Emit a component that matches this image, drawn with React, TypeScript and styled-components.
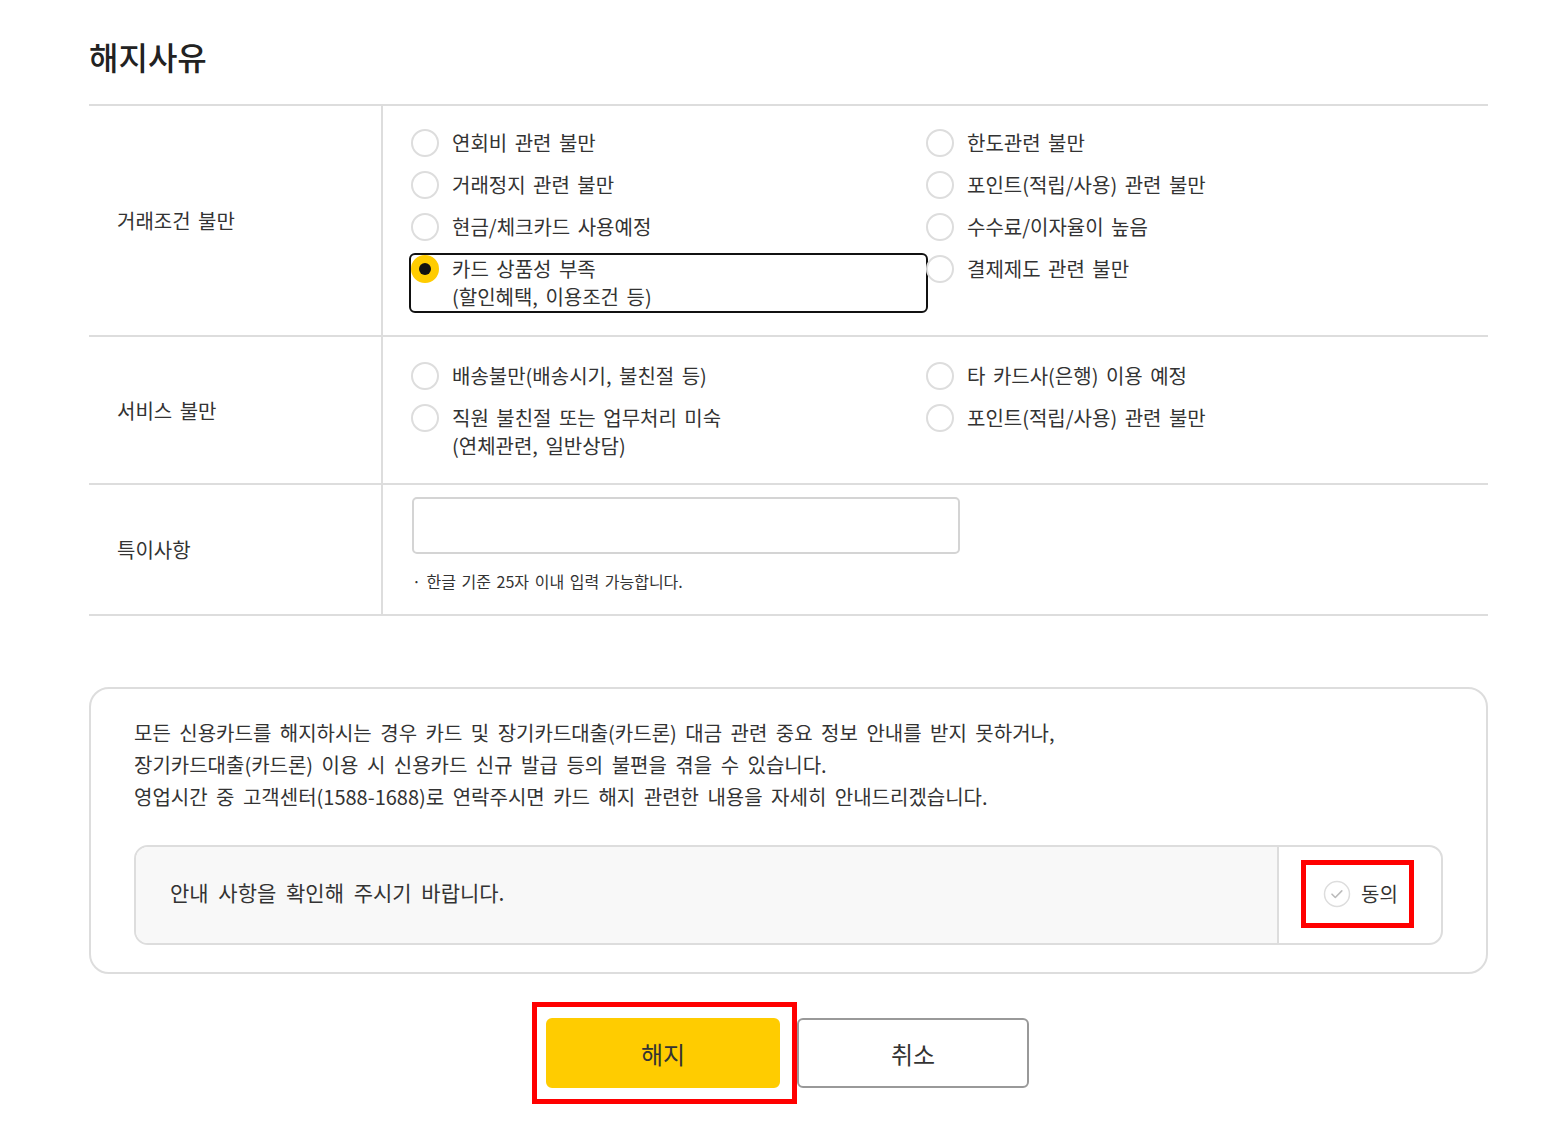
import styled, { createGlobalStyle } from 'styled-components';

const GlobalStyle = createGlobalStyle`
    body {
        margin: 0;
        background: #fff;
        font-family: 'Noto Sans CJK KR', 'Noto Sans', sans-serif;
        color: #333;
    }
    * {
        box-sizing: border-box;
    }
`;

const Page = styled.div`
    width: 1566px;
    padding: 31px 78px 20px 89px;
`;

const Title = styled.h2`
    margin: 0 0 23px;
    font-size: 32px;
    font-weight: 500;
    line-height: 50px;
    color: #222;
`;

//table
const Table = styled.div`
    border-top: 2px solid #ddd;
`;

const Row = styled.div`
    display: grid;
    grid-template-columns: 294px 1fr;
    border-bottom: 2px solid #ddd;
`;

const Label = styled.div`
    display: flex;
    align-items: center;
    padding-left: 28px;
    border-right: 2px solid #ddd;
    font-size: 20px;
    color: #333;
    word-spacing: 3px;
`;

const Cell = styled.div<{ $pad: string }>`
    padding: ${(p) => p.$pad};
`;

const RadioGrid = styled.div<{ $rows: number }>`
    display: grid;
    grid-template-columns: 515px 515px;
    grid-auto-flow: column;
    grid-template-rows: repeat(${(p) => p.$rows}, auto);
    row-gap: 14px;
`;

const RadioItem = styled.label<{ $focused?: boolean }>`
    display: flex;
    align-items: flex-start;
    gap: 13px;
    font-size: 20px;
    line-height: 28px;
    color: #333;
    word-spacing: 3px;
    border-radius: 4px;
    outline: ${(p) => (p.$focused ? '2.5px solid #111' : 'none')};
    cursor: pointer;
`;

const Circle = styled.span<{ $checked?: boolean }>`
    flex: none;
    width: 28px;
    height: 28px;
    border-radius: 50%;
    border: 2px solid ${(p) => (p.$checked ? '#ffcc00' : '#ddd')};
    background: ${(p) => (p.$checked ? '#ffcc00' : '#fff')};
    display: flex;
    align-items: center;
    justify-content: center;
    &::after {
        content: '';
        display: ${(p) => (p.$checked ? 'block' : 'none')};
        width: 12px;
        height: 12px;
        border-radius: 50%;
        background: #111;
    }
`;

const TextInput = styled.input`
    display: block;
    width: 548px;
    height: 57px;
    border: 2px solid #d4d4d4;
    border-radius: 5px;
    font-size: 18px;
    padding: 0 16px;
    font-family: inherit;
    outline: none;
`;

const Note = styled.p`
    margin: 16px 0 0;
    font-size: 16px;
    line-height: 22px;
    color: #333;
    word-spacing: 2px;
`;

//notice
const NoticeBox = styled.div`
    margin-top: 71px;
    border: 2px solid #ddd;
    border-radius: 20px;
    padding: 28px 43px 27px 43px;
`;

const NoticeText = styled.p`
    margin: 0;
    font-size: 20px;
    line-height: 32px;
    color: #333;
    word-spacing: 4px;
`;

const ConfirmBar = styled.div`
    margin-top: 32px;
    display: flex;
    height: 100px;
    border: 2px solid #ddd;
    border-radius: 14px;
    overflow: hidden;
`;

const ConfirmMsg = styled.div`
    flex: 1;
    display: flex;
    align-items: center;
    padding: 0 0 6px 34px;
    background: #f8f8f8;
    border-right: 2px solid #ddd;
    font-size: 21px;
    color: #333;
    word-spacing: 5px;
`;

const AgreeCell = styled.div`
    width: 162px;
    display: flex;
    align-items: center;
    padding: 0 0 2px 22px;
`;

const Highlight = styled.div<{ $pad: string }>`
    border: 5px solid #f00;
    padding: ${(p) => p.$pad};
    display: flex;
    align-items: center;
`;

const AgreeLabel = styled.span`
    display: flex;
    align-items: center;
    gap: 10px;
    font-size: 20px;
    color: #333;
`;

//buttons
const ButtonRow = styled.div`
    display: flex;
    justify-content: center;
    align-items: center;
    margin-top: 28px;
    padding-right: 16px;
`;

const Button = styled.button<{ $primary?: boolean }>`
    width: ${(p) => (p.$primary ? '234px' : '232px')};
    height: 70px;
    border-radius: 6px;
    border: 2px solid ${(p) => (p.$primary ? '#ffcc00' : '#999')};
    background: ${(p) => (p.$primary ? '#ffcc00' : '#fff')};
    font-family: inherit;
    font-size: 24px;
    color: #333;
    cursor: pointer;
`;

const tradeReasons = [
    { text: '연회비 관련 불만' },
    { text: '거래정지 관련 불만' },
    { text: '현금/체크카드 사용예정' },
    { text: '카드 상품성 부족', sub: '(할인혜택, 이용조건 등)', checked: true },
    { text: '한도관련 불만' },
    { text: '포인트(적립/사용) 관련 불만' },
    { text: '수수료/이자율이 높음' },
    { text: '결제제도 관련 불만' },
];

const serviceReasons = [
    { text: '배송불만(배송시기, 불친절 등)' },
    { text: '직원 불친절 또는 업무처리 미숙', sub: '(연체관련, 일반상담)' },
    { text: '타 카드사(은행) 이용 예정' },
    { text: '포인트(적립/사용) 관련 불만' },
];

type Reason = { text: string; sub?: string; checked?: boolean };

function RadioList({ items, rows }: { items: Reason[]; rows: number }) {
    return (
        <RadioGrid $rows={rows}>
            {items.map((v, i) => (
                <RadioItem key={i} $focused={v.checked}>
                    <Circle $checked={v.checked} />
                    <span>
                        {v.text}
                        {v.sub && (
                            <>
                                <br />
                                {v.sub}
                            </>
                        )}
                    </span>
                </RadioItem>
            ))}
        </RadioGrid>
    );
}

function CheckIcon() {
    return (
        <svg width="28" height="28" viewBox="0 0 28 28">
            <circle cx="14" cy="14" r="12.5" fill="#fff" stroke="#ddd" strokeWidth="1.5" />
            <path d="M9 14.2l3.3 3.3 6.5-6.6" fill="none" stroke="#bbb" strokeWidth="1.6" strokeLinecap="round" strokeLinejoin="round" />
        </svg>
    );
}

export default function App() {
    return (
        <Page>
            <GlobalStyle />
            <Title>해지사유</Title>
            <Table>
                <Row>
                    <Label>거래조건 불만</Label>
                    <Cell $pad="23px 0 24px 28px">
                        <RadioList items={tradeReasons} rows={4} />
                    </Cell>
                </Row>
                <Row>
                    <Label>서비스 불만</Label>
                    <Cell $pad="25px 0 23px 28px">
                        <RadioList items={serviceReasons} rows={2} />
                    </Cell>
                </Row>
                <Row>
                    <Label>특이사항</Label>
                    <Cell $pad="12px 0 22px 29px">
                        <TextInput type="text" />
                        <Note>· 한글 기준 25자 이내 입력 가능합니다.</Note>
                    </Cell>
                </Row>
            </Table>

            <NoticeBox>
                <NoticeText>
                    모든 신용카드를 해지하시는 경우 카드 및 장기카드대출(카드론) 대금 관련 중요 정보 안내를 받지 못하거나,
                    <br />
                    장기카드대출(카드론) 이용 시 신용카드 신규 발급 등의 불편을 겪을 수 있습니다.
                    <br />
                    영업시간 중 고객센터(1588-1688)로 연락주시면 카드 해지 관련한 내용을 자세히 안내드리겠습니다.
                </NoticeText>
                <ConfirmBar>
                    <ConfirmMsg>안내 사항을 확인해 주시기 바랍니다.</ConfirmMsg>
                    <AgreeCell>
                        <Highlight $pad="14px 11px 15px 17px">
                            <AgreeLabel>
                                <CheckIcon />
                                동의
                            </AgreeLabel>
                        </Highlight>
                    </AgreeCell>
                </ConfirmBar>
            </NoticeBox>

            <ButtonRow>
                <Highlight $pad="11px 12px 11px 9px">
                    <Button $primary>해지</Button>
                </Highlight>
                <Button>취소</Button>
            </ButtonRow>
        </Page>
    );
}
